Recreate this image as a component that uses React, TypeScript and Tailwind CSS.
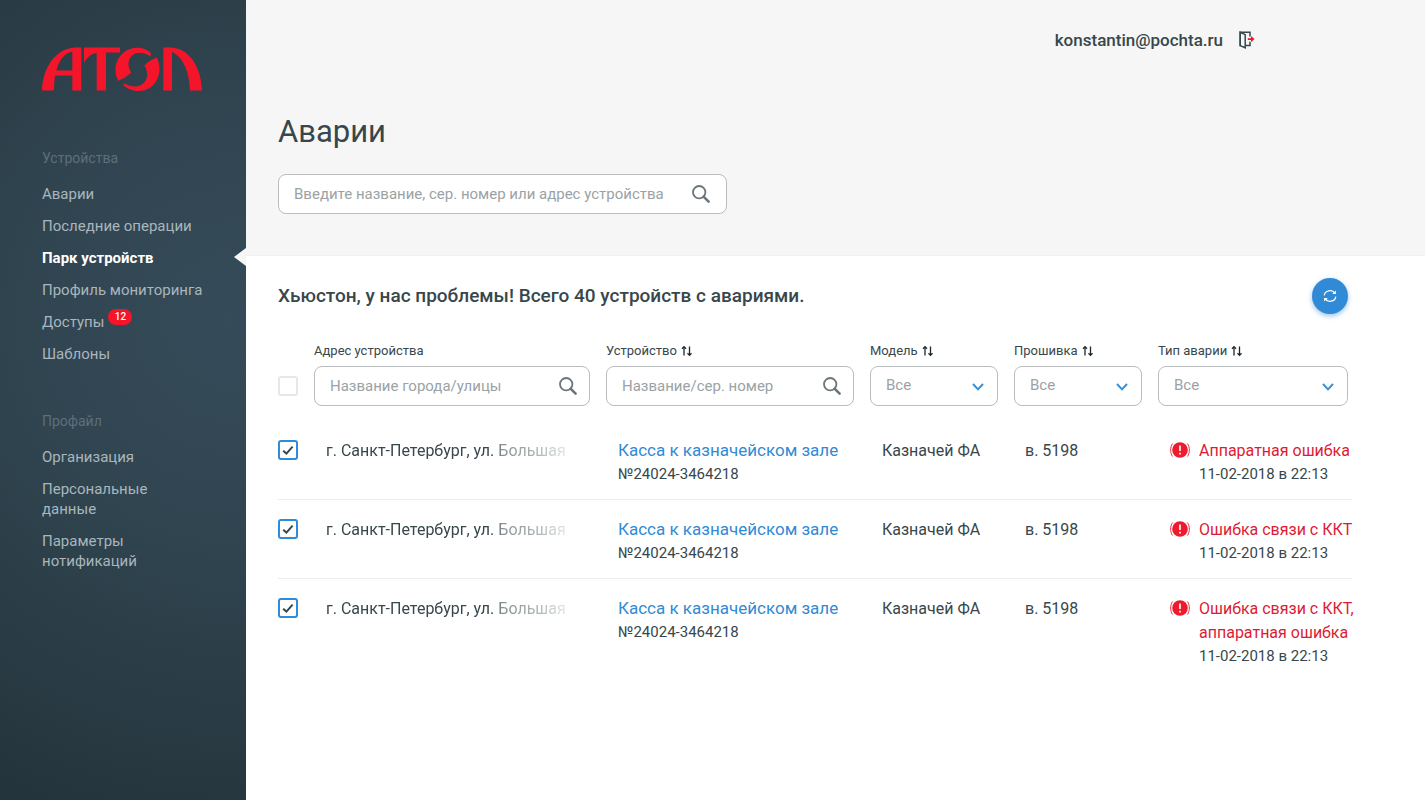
import { useState } from "react";
import type { ReactNode } from "react";
import { clsx } from "clsx";

interface NavItem {
  title: string;
  active?: boolean;
  badge?: number;
}

interface Device {
  id: number;
  address: string;
  name: string;
  serial: string;
  model: string;
  firmware: string;
  error: string;
  date: string;
}

const deviceLinks: NavItem[] = [
  { title: "Аварии" },
  { title: "Последние операции" },
  { title: "Парк устройств", active: true },
  { title: "Профиль мониторинга" },
  { title: "Доступы", badge: 12 },
  { title: "Шаблоны" },
];

const profileLinks: NavItem[] = [
  { title: "Организация" },
  { title: "Персональные данные" },
  { title: "Параметры нотификаций" },
];

const common = {
  address: "г. Санкт-Петербург, ул. Большая",
  name: "Касса к казначейском зале",
  serial: "№24024-3464218",
  model: "Казначей ФА",
  firmware: "в. 5198",
  date: "11-02-2018 в 22:13",
};

const devices: Device[] = [
  { id: 1, ...common, error: "Аппаратная ошибка" },
  { id: 2, ...common, error: "Ошибка связи с ККТ" },
  { id: 3, ...common, error: "Ошибка связи с ККТ, аппаратная ошибка" },
];

function Logo() {
  return (
    <svg viewBox="36 38 480 134" className="h-[45px] w-40 fill-[#f5152a]" role="img" aria-label="Атол">
      <path
        fillRule="evenodd"
        d="M36 168C38 98 78 42 135 39H154V168H127V123H75Q72 145 72 168ZM79 108H127V51C103 56 87 78 79 108Z"
      />
      <path d="M162 39H270V54H228V168H200V55Q176 60 162 84Z" />
      <path d="M364 57C345 36 306 34 281 54C254 76 250 113 265 139C278 134 292 125 304 114C292 97 292 76 307 62C323 50 345 54 360 65Z" />
      <path d="M380 69C366 74 354 82 343 93C356 113 354 135 339 148C323 160 301 157 284 147L279 151C301 174 340 176 365 156C390 134 395 96 380 69Z" />
      <path d="M400 39H424C478 42 514 98 516 168H480C478 115 462 70 426 52V168H400Z" />
    </svg>
  );
}

function SearchIcon() {
  return (
    <svg viewBox="0 0 18 18" className="size-[18px] text-[#6b767b]" fill="none" stroke="currentColor" aria-hidden="true">
      <circle cx="7.2" cy="7.2" r="6.2" strokeWidth="1.8" />
      <path d="M11.6 11.6L16.6 16.6" strokeWidth="2.6" strokeLinecap="round" />
    </svg>
  );
}

function SortIcon() {
  return (
    <svg viewBox="0 0 12 12" className="h-3 w-3" fill="none" stroke="#1d2629" strokeWidth="1.3" aria-hidden="true">
      <path d="M3 10.5V2" />
      <path d="M1 3.8L3 1.6L5 3.8" />
      <path d="M8.5 1.5V10" />
      <path d="M6.5 8.2L8.5 10.4L10.5 8.2" />
    </svg>
  );
}

function ExitIcon() {
  return (
    <svg viewBox="0 0 16 18" className="h-[18px] w-4" fill="none" strokeWidth="1.5" aria-hidden="true">
      <path d="M11 5.5V1.2H1.2V14.5H2" stroke="#37474b" />
      <path d="M1.2 1.2L6.2 3.6V16.8L1.2 14.6Z" stroke="#37474b" />
      <path d="M6.2 14.6H11V10.8" stroke="#37474b" />
      <path d="M8.8 8.1H13" stroke="#f5152a" strokeWidth="1.8" />
      <path d="M12 5L15.6 8.1L12 11.2Z" fill="#f5152a" />
    </svg>
  );
}

function RefreshIcon() {
  return (
    <svg viewBox="0 0 14 14" className="size-3.5" fill="none" stroke="white" strokeWidth="1.2" aria-hidden="true">
      <path d="M1.2 6.4A5.8 5.3 0 0 1 12 4.4" />
      <path d="M12.8 7.6A5.8 5.3 0 0 1 2 9.6" />
      <path d="M12.9 1.4V5.1H9.2Z" fill="white" stroke="none" />
      <path d="M1.1 12.6V8.9H4.8Z" fill="white" stroke="none" />
    </svg>
  );
}

function AlertIcon() {
  return (
    <svg viewBox="0 0 20 18" className="mt-0.5 h-[18px] w-5 shrink-0" fill="none" aria-hidden="true">
      <circle cx="10" cy="9" r="7.8" fill="#ec1b2e" />
      <path d="M10 4.5V10.1" stroke="white" strokeWidth="1.6" />
      <path d="M10 11.8V13.5" stroke="white" strokeWidth="1.6" />
      <path d="M2.6 2.5C0 6 0 12 2.6 15.5M17.4 2.5C20 6 20 12 17.4 15.5" stroke="#ec1b2e" strokeWidth="0.9" />
    </svg>
  );
}

function NavGroup({ title, items }: { title: string; items: NavItem[] }) {
  return (
    <section>
      <h2 className="pl-[42px] text-sm leading-5 text-[#5d6f79]">{title}</h2>
      <ul className="mt-4 flex flex-col gap-3">
        {items.map((item) => (
          <li key={item.title} className="relative px-[42px]">
            <a
              href="#"
              aria-current={item.active ? "page" : undefined}
              className={clsx(
                "block text-[15px] leading-5",
                item.active ? "font-bold text-white" : "text-[#a9b6bd]"
              )}
            >
              {item.title}
              {item.badge && (
                <span className="ml-1 inline-block h-4 w-6 -translate-y-1.5 rounded-full bg-[#f5152a] text-center align-middle text-[10px] font-medium leading-4 text-white">
                  {item.badge}
                </span>
              )}
            </a>
            {item.active && (
              <svg viewBox="0 0 12 18" className="absolute right-0 top-0 h-[18px] w-3 fill-[#f6f6f6]" aria-hidden="true">
                <path d="M12 0V18L0 9Z" />
              </svg>
            )}
          </li>
        ))}
      </ul>
    </section>
  );
}

interface CheckboxProps {
  label: string;
  checked: boolean;
  onChange: (checked: boolean) => void;
}

function Checkbox({ label, checked, onChange }: CheckboxProps) {
  return (
    <label className="relative block size-5">
      <input
        type="checkbox"
        aria-label={label}
        checked={checked}
        onChange={(e) => onChange(e.target.checked)}
        className="block size-5 appearance-none rounded-[3px] border-2 border-[#e6e7e8] bg-white checked:border-[#318ad6]"
      />
      {checked && (
        <svg viewBox="0 0 20 20" className="pointer-events-none absolute inset-0" fill="none" stroke="#37474b" strokeWidth="2" aria-hidden="true">
          <path d="M5.2 10.8L8.4 13.6L14.6 6.6" />
        </svg>
      )}
    </label>
  );
}

interface SearchFieldProps {
  id: string;
  placeholder: string;
  label?: string;
  wide?: boolean;
}

function SearchField({ id, placeholder, label, wide }: SearchFieldProps) {
  return (
    <div
      className={clsx(
        "flex h-10 items-center rounded-lg border border-[#b9bdbf] bg-white pl-[15px]",
        wide ? "pr-4" : "pr-3"
      )}
    >
      <input
        id={id}
        type="text"
        aria-label={label}
        placeholder={placeholder}
        className="min-w-0 flex-1 text-[15px] font-normal leading-5 text-[#37474b] outline-none placeholder:text-[#9ba2a5]"
      />
      <SearchIcon />
    </div>
  );
}

function SelectField({ id }: { id: string }) {
  return (
    <div className="relative">
      <select
        id={id}
        className="block h-10 w-full appearance-none rounded-lg border border-[#b9bdbf] bg-white px-[15px] pb-0.5 text-[15px] font-normal text-[#9ba2a5] outline-none"
      >
        <option>Все</option>
      </select>
      <svg
        viewBox="0 0 12 8"
        className="pointer-events-none absolute right-3.5 top-[17px] h-2 w-3"
        fill="none"
        stroke="#3a8fd9"
        strokeWidth="2"
        aria-hidden="true"
      >
        <path d="M1 1L6 6.4L11 1" />
      </svg>
    </div>
  );
}

interface ColumnHeadProps {
  id: string;
  title: string;
  sortable?: boolean;
  last?: boolean;
  children: ReactNode;
}

function ColumnHead({ id, title, sortable, last, children }: ColumnHeadProps) {
  return (
    <th scope="col" className={clsx("pb-[15px] text-left", last ? "pr-1" : "pr-4")}>
      <div className="mb-1.5 flex h-[18px] items-center gap-1">
        <label htmlFor={id} className="text-[13px] font-normal">
          {title}
        </label>
        {sortable && (
          <button type="button" aria-label={`Сортировать: ${title}`}>
            <SortIcon />
          </button>
        )}
      </div>
      {children}
    </th>
  );
}

export default function App() {
  const [selected, setSelected] = useState<number[]>([1, 2, 3]);
  const [all, setAll] = useState(false);

  const toggle = (id: number, checked: boolean) => {
    setSelected((prev) => (checked ? [...prev, id] : prev.filter((item) => item !== id)));
  };

  const toggleAll = (checked: boolean) => {
    setAll(checked);
    setSelected(checked ? devices.map((device) => device.id) : []);
  };

  return (
    <div className="flex min-h-screen bg-white font-[Roboto,sans-serif] text-[#37474b]">
      <aside className="w-[246px] shrink-0 bg-[radial-gradient(ellipse_520px_540px_at_230px_320px,#364b59_0%,#304550_40%,#24333b_100%)] pt-[47px]">
        <div className="pl-[42px]">
          <Logo />
        </div>
        <nav className="mt-14 flex flex-col gap-[47px]">
          <NavGroup title="Устройства" items={deviceLinks} />
          <NavGroup title="Профайл" items={profileLinks} />
        </nav>
      </aside>

      <main className="min-w-0 flex-1">
        <header className="border-b border-[#f0f0f0] bg-[#f6f6f6] pb-[41px] pl-8 pr-[170px] pt-7">
          <div className="flex items-center justify-end gap-4">
            <span className="text-[17px] font-medium leading-6">konstantin@pochta.ru</span>
            <button type="button" aria-label="Выйти">
              <ExitIcon />
            </button>
          </div>
          <h1 className="mt-[60px] text-[31px] leading-10">Аварии</h1>
          <div className="mt-[22px] max-w-[449px]">
            <SearchField
              id="search"
              label="Поиск устройства"
              placeholder="Введите название, сер. номер или адрес устройства"
              wide
            />
          </div>
        </header>

        <section className="pl-8 pr-[73px] pt-[22px]">
          <div className="flex items-center justify-between pr-1">
            <p className="text-[19px] font-medium leading-7">
              Хьюстон, у нас проблемы! Всего 40 устройств с авариями.
            </p>
            <button
              type="button"
              aria-label="Обновить"
              className="flex size-9 items-center justify-center rounded-full bg-[#318ad6] shadow-[0_2px_5px_rgba(49,138,214,0.5)]"
            >
              <RefreshIcon />
            </button>
          </div>

          <table className="mt-7 w-full table-fixed border-collapse">
            <colgroup>
              <col className="w-9" />
              <col />
              <col className="w-[264px]" />
              <col className="w-36" />
              <col className="w-36" />
              <col className="w-[194px]" />
            </colgroup>
            <thead>
              <tr>
                <th scope="col" className="pb-[25px] align-bottom">
                  <Checkbox label="Выбрать все" checked={all} onChange={toggleAll} />
                </th>
                <ColumnHead id="address" title="Адрес устройства">
                  <SearchField id="address" placeholder="Название города/улицы" />
                </ColumnHead>
                <ColumnHead id="device" title="Устройство" sortable>
                  <SearchField id="device" placeholder="Название/сер. номер" />
                </ColumnHead>
                <ColumnHead id="model" title="Модель" sortable>
                  <SelectField id="model" />
                </ColumnHead>
                <ColumnHead id="firmware" title="Прошивка" sortable>
                  <SelectField id="firmware" />
                </ColumnHead>
                <ColumnHead id="error" title="Тип аварии" sortable last>
                  <SelectField id="error" />
                </ColumnHead>
              </tr>
            </thead>
            <tbody>
              {devices.map((device) => (
                <tr key={device.id} className="border-b border-[#ebecec] align-top last:border-b-0">
                  <td className="pt-[19px]">
                    <Checkbox
                      label={`Выбрать устройство ${device.id}`}
                      checked={selected.includes(device.id)}
                      onChange={(checked) => toggle(device.id, checked)}
                    />
                  </td>
                  <td className="pl-3 pt-[18px]">
                    <span className="inline-block whitespace-nowrap [mask-image:linear-gradient(to_right,#000_71%,#0009_73%,#0006_88%,#0002_100%)]">
                      {device.address}
                    </span>
                  </td>
                  <td className="pb-[13px] pl-3 pt-[17px]">
                    <a href="#" className="block text-[17px] leading-6 text-[#318ad6]">
                      {device.name}
                    </a>
                    <div className="text-[15px] leading-6">{device.serial}</div>
                  </td>
                  <td className="pl-3 pt-[18px]">{device.model}</td>
                  <td className="pl-[11px] pt-[18px]">{device.firmware}</td>
                  <td className="pb-[13px] pl-3 pt-[18px]">
                    <div className="flex gap-[9px]">
                      <AlertIcon />
                      <div className="-mr-2">
                        <div className="leading-6 text-[#dd1c33]">{device.error}</div>
                        <div className="text-[15px] leading-[22px]">{device.date}</div>
                      </div>
                    </div>
                  </td>
                </tr>
              ))}
            </tbody>
          </table>
        </section>
      </main>
    </div>
  );
}
